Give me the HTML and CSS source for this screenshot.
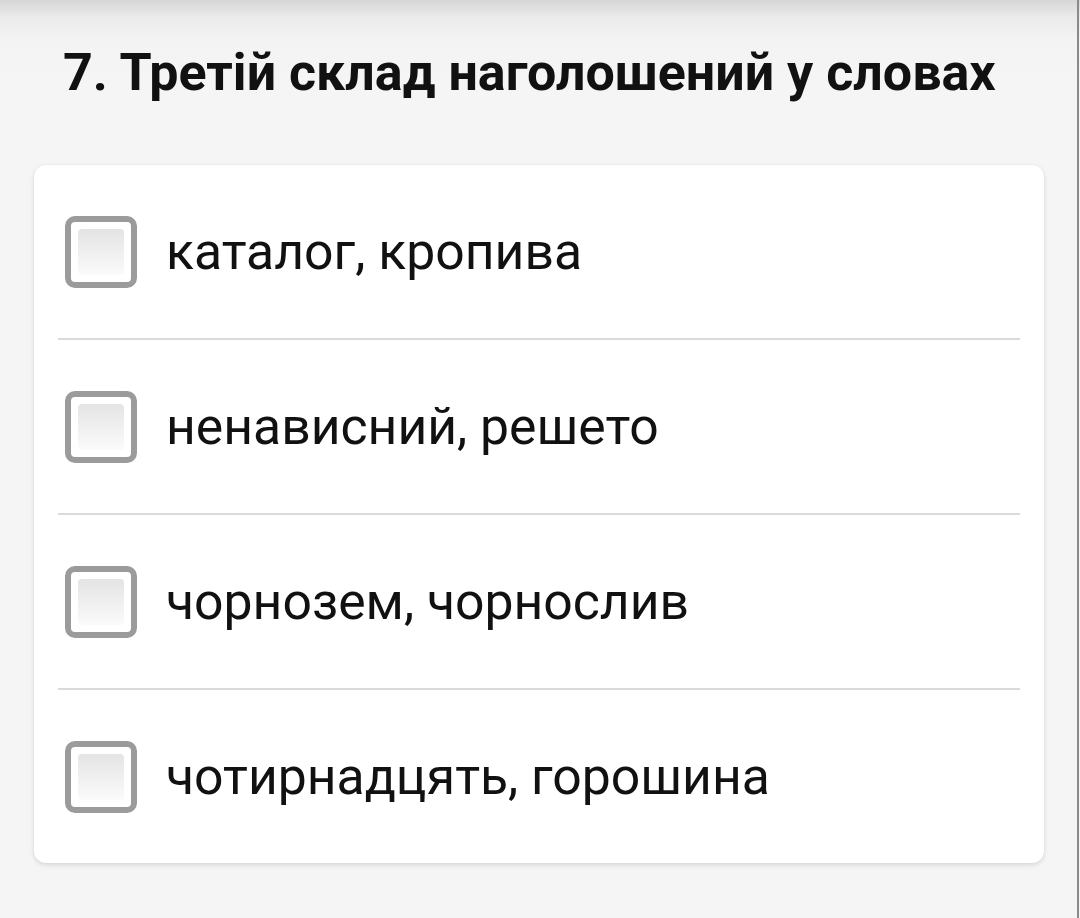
FILE: index.html
```html
<!DOCTYPE html>
<html lang="uk">
<head>
<meta charset="utf-8">
<link rel="stylesheet" href="styles.css">
</head>
<body>
<div class="page">
  <h1 class="title">7. Третій склад наголошений у словах</h1>
  <div class="card">
    <label class="row"><span class="box"><span class="inner"></span></span><span class="text">каталог, кропива</span></label>
    <div class="divider"></div>
    <label class="row"><span class="box"><span class="inner"></span></span><span class="text">ненависний, решето</span></label>
    <div class="divider"></div>
    <label class="row"><span class="box"><span class="inner"></span></span><span class="text">чорнозем, чорнослив</span></label>
    <div class="divider"></div>
    <label class="row"><span class="box"><span class="inner"></span></span><span class="text">чотирнадцять, горошина</span></label>
  </div>
</div>
<div class="edge"></div>
</body>
</html>
```
FILE: styles.css
```css
html, body {
  margin: 0;
  padding: 0;
  width: 1080px;
  height: 918px;
  overflow: hidden;
}
body {
  background: linear-gradient(to bottom, #d6d6d6 0px, #ebebeb 18px, #f3f3f3 40px, #f5f5f5 80px);
  font-family: Roboto, "Noto Sans", sans-serif;
  color: #111;
  position: relative;
}
.page {
  padding: 0 36px 0 34px;
}
.title {
  margin: 0;
  padding: 40px 0 0 29px;
  height: 165px;
  box-sizing: border-box;
  font-size: 52px;
  font-weight: 700;
  line-height: 66px;
  color: #111;
}
.card {
  background: #fff;
  border-radius: 12px;
  box-shadow: 0 2px 5px rgba(0,0,0,0.12), 0 0 2px rgba(0,0,0,0.06);
  padding: 0 24px;
  width: 1010px;
  box-sizing: border-box;
}
.row {
  display: flex;
  align-items: center;
  height: 173px;
  padding-left: 7px;
}
.box {
  width: 72px;
  height: 72px;
  box-sizing: border-box;
  border: 6px solid #9b9b9b;
  border-radius: 10px;
  display: flex;
  align-items: center;
  justify-content: center;
  background: #fff;
  flex: none;
}
.inner {
  width: 46px;
  height: 46px;
  border-radius: 4px;
  background: linear-gradient(to bottom, #e4e4e4, #fbfbfb);
}
.text {
  margin-left: 29px;
  font-size: 51.7px;
  color: #111;
  line-height: 62px;
}
.divider {
  height: 2px;
  background: #dadada;
}
.edge {
  position: absolute;
  top: 0;
  right: 1px;
  width: 2px;
  height: 918px;
  background: #8a8a8a;
}
```
